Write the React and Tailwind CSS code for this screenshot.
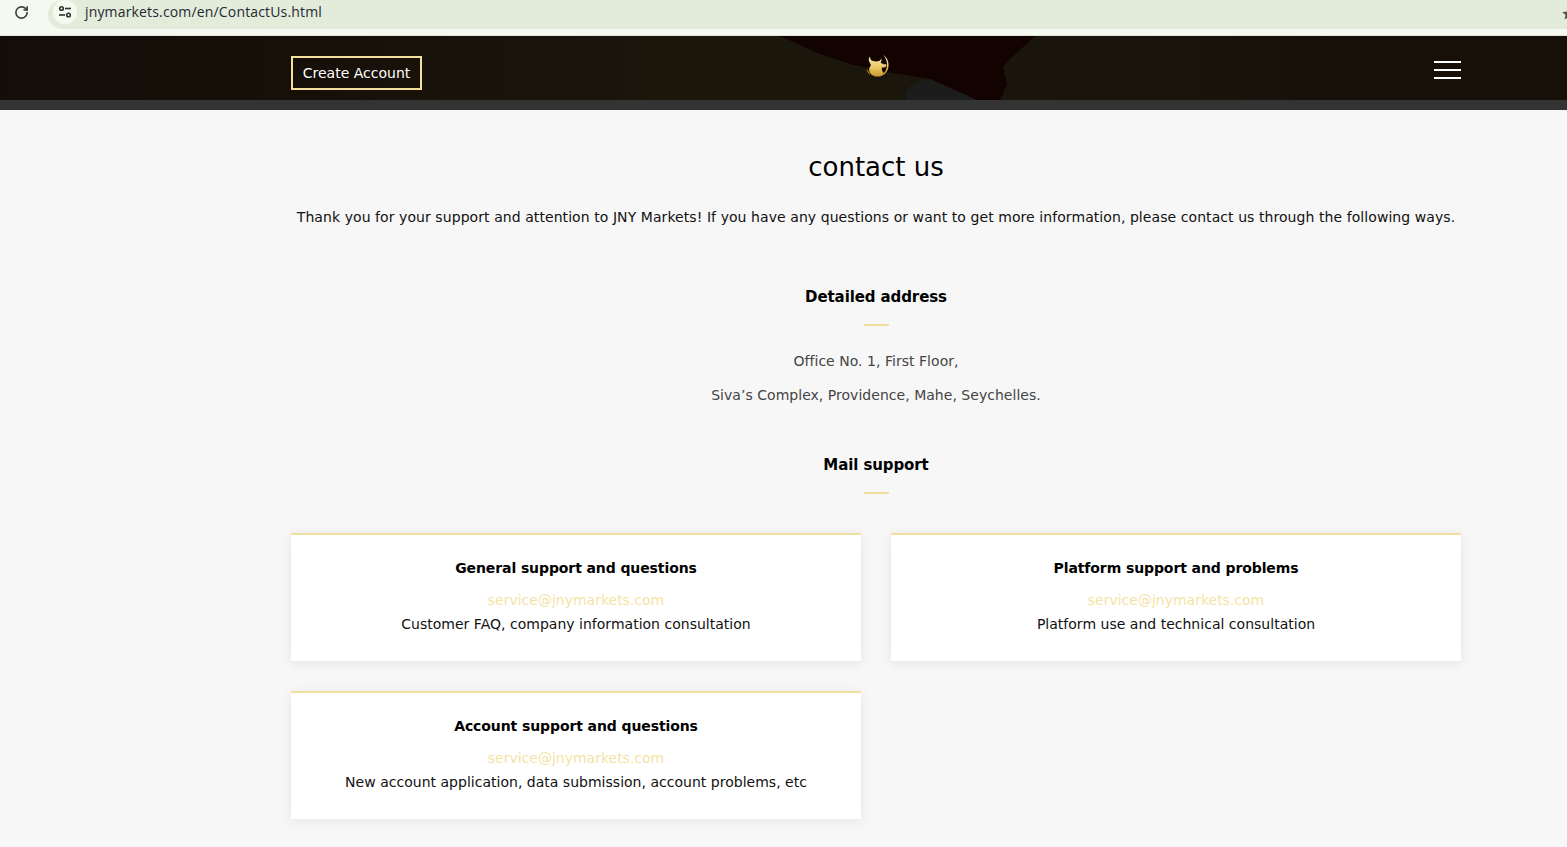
import { RotateCw } from 'lucide-react';

const cards = [
  { title: 'General support and questions', text: 'Customer FAQ, company information consultation' },
  { title: 'Platform support and problems', text: 'Platform use and technical consultation' },
  { title: 'Account support and questions', text: 'New account application, data submission, account problems, etc' },
];

function BrowserBar() {
  return (
    <div className="h-9 bg-[#f6f9f0] border-b border-[#dfe3d8] overflow-hidden">
      <div className="h-[29px] bg-[#f6f9f0] flex relative">
        <div className="w-12 flex items-center justify-center">
          <RotateCw className="w-[15px] h-[15px] text-[#38443a] -mt-[5px] -ml-[5px]" strokeWidth={2.6} />
        </div>
        <div className="flex-1 bg-[#e3ebda] rounded-l-[16px] flex items-center pl-[5px]">
          <div className="w-6 h-6 rounded-full bg-[#f6f9f0] flex items-center justify-center -mt-[5px]">
            <svg width="14" height="14" viewBox="0 0 14 14" fill="none" stroke="#2f352f" strokeWidth="1.6">
              <circle cx="3.5" cy="3.5" r="1.8" />
              <path d="M7 3.5h6" />
              <path d="M1 10h6" />
              <circle cx="10.5" cy="10" r="1.8" />
            </svg>
          </div>
          <span className="ml-2 text-[14px] tracking-[0.16px] text-[#1f2a33] -mt-[7px] font-['Open_Sans',sans-serif]">jnymarkets.com/en/ContactUs.html</span>
        </div>
        <svg className="absolute -right-[9px] top-[6px]" width="15" height="15" viewBox="0 0 24 24" fill="#4a524a">
          <path d="M12 2l3 7 7 .6-5.4 4.7 1.7 7.2L12 17.7l-6.3 3.8 1.7-7.2L2 9.6 9 9z" />
        </svg>
      </div>
    </div>
  );
}

function Logo() {
  return (
    <svg width="36" height="32" viewBox="0 0 36 32">
      <defs>
        <linearGradient id="gold" x1="0" y1="0" x2="0" y2="1">
          <stop offset="0" stopColor="#f6ebb6" />
          <stop offset="0.55" stopColor="#ecc862" />
          <stop offset="1" stopColor="#c9962e" />
        </linearGradient>
      </defs>
      <path d="M23 4.500c5 3.500 6.800 9.500 4.800 15-1.800 4.600-6.200 7.400-10.800 7.200 4.200-.8 7.800-3.400 9.300-7.500 1.800-5 .3-10.600-3.300-14.700z" fill="url(#gold)" />
      <path d="M10 6.500C10 9 11 10.500 13 11C15.500 11.800 18 11.500 19.500 10.800C20.500 10.200 21 9.500 21.300 8.500C21.800 10 21.500 11.500 20.500 12.500L24 14.500L26 14L26.500 16L24.500 17.500L22 17.500C21.500 19.500 22 21.500 24 23.200C22 25.500 19 26.800 16 26.500C12.500 26 9.500 23.500 9.200 20C9 18 10 16.500 11 15.500C10.500 13.500 9 12 8.800 10C8.700 8.500 9.200 7.500 10 6.500z" fill="url(#gold)" />
      <path d="M6.500 19c.4 2.500 1.800 4.700 3.700 6-.3-1.900-1.900-4-3.700-6z" fill="#a98432" />
    </svg>
  );
}

function Header() {
  return (
    <div className="h-[74px] bg-[#333333]">
      <div className="h-16 bg-[#171009] relative overflow-hidden">
        <svg className="absolute inset-0 w-full h-full" viewBox="0 0 1567 64" preserveAspectRatio="none">
          <defs>
            <linearGradient id="wash" x1="0" y1="0" x2="1" y2="0">
              <stop offset="0" stopColor="#140e08" />
              <stop offset="0.2" stopColor="#171009" />
              <stop offset="0.45" stopColor="#1b170b" />
              <stop offset="0.72" stopColor="#1a150b" />
              <stop offset="0.85" stopColor="#171009" />
            </linearGradient>
          </defs>
          <rect width="1567" height="64" fill="url(#wash)" />
          <path d="M780 0H1035L1010 23L1003 31L1007 48L1000 64H977L957 55L930 43L887 36L850 28L820 18z" fill="#120200" />
          <path d="M905 64C906 52 912 45 930 43L957 55L977 64z" fill="#1b1c1b" />
        </svg>
        <div className="relative w-[1170px] ml-[291px] h-full flex items-start">
          <button className="mt-5 h-[34px] w-[131px] border-2 border-[#f2e09c] text-white text-[14px]">Create Account</button>
          <div className="mt-[14px] ml-[438px]">
            <Logo />
          </div>
          <div className="mt-[25px] ml-auto w-[27px] flex flex-col gap-[6px]">
            <div className="h-0.5 bg-white" />
            <div className="h-0.5 bg-white" />
            <div className="h-0.5 bg-white" />
          </div>
        </div>
      </div>
    </div>
  );
}

function SectionTitle({ children }) {
  return (
    <div className="flex flex-col items-center">
      <h3 className="text-[15px] font-bold leading-6 tracking-[-0.1px] text-black">{children}</h3>
      <div className="mt-[15px] w-[25px] h-0.5 bg-[#f2e09c]" />
    </div>
  );
}

export default function App() {
  return (
    <div className="h-[847px] overflow-hidden bg-[#f7f7f7] font-['DejaVu_Sans',Verdana,sans-serif]">
      <BrowserBar />
      <Header />
      <div className="w-[1170px] ml-[291px]">
        <h1 className="mt-[38px] text-center text-[26px] leading-[38px] text-black">contact us</h1>
        <p className="mt-[19px] text-center text-[14px] leading-6 tracking-[0.07px] text-[#111]">
          Thank you for your support and attention to JNY Markets! If you have any questions or want to get more information, please contact us through the following ways.
        </p>
        <div className="mt-[56px]">
          <SectionTitle>Detailed address</SectionTitle>
        </div>
        <div className="mt-[23px] text-center text-[14px] leading-6 tracking-[0.03px] text-[#444]">
          <p>Office No. 1, First Floor,</p>
          <p className="mt-[10px]">Siva’s Complex, Providence, Mahe, Seychelles.</p>
        </div>
        <div className="mt-[46px]">
          <SectionTitle>Mail support</SectionTitle>
        </div>
        <div className="mt-[39px] grid grid-cols-2 gap-[30px]">
          {cards.map((c) => (
            <div key={c.title} className="h-32 bg-white border-t-2 border-[#f0e0a0] shadow-[0_2px_12px_rgba(0,0,0,0.08)] text-center pt-[21px]">
              <h4 className="text-[14px] font-bold leading-6 tracking-[-0.1px] text-black">{c.title}</h4>
              <div className="mt-2 text-[14px] leading-6 text-[#f5e3a5]">service@jnymarkets.com</div>
              <div className="text-[14px] leading-6 tracking-[0.015px] text-[#111]">{c.text}</div>
            </div>
          ))}
        </div>
      </div>
    </div>
  );
}
